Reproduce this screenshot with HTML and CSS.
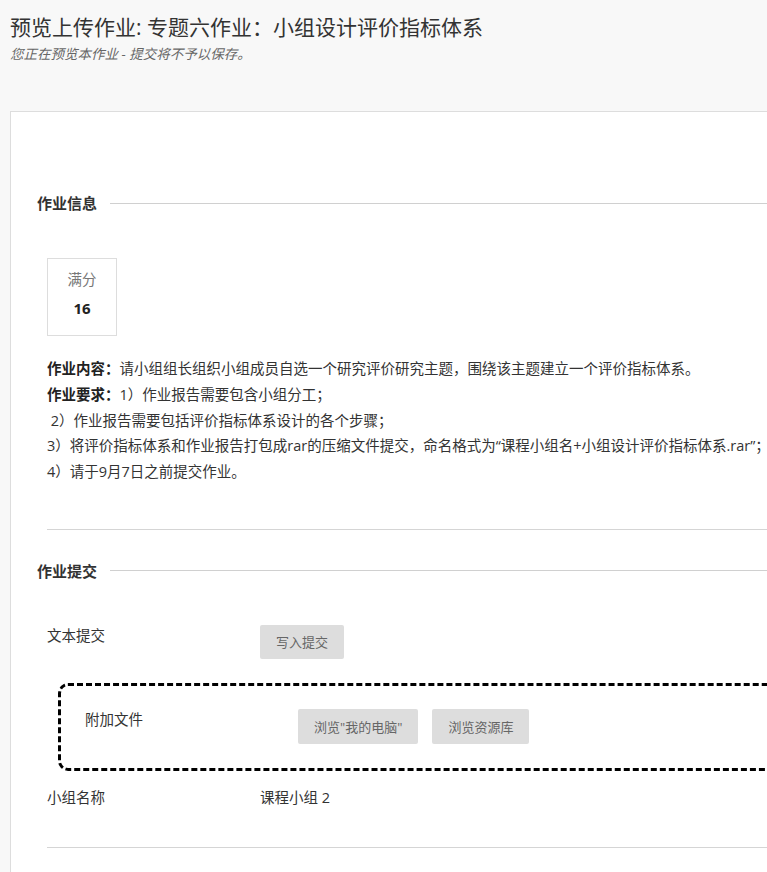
FILE: index.html
```html
<!DOCTYPE html>
<html lang="zh-CN">
<head>
  <meta charset="UTF-8">
  <meta name="viewport" content="width=device-width, initial-scale=1.0">
  <title>预览上传作业</title>
  <link rel="stylesheet" href="styles.css">
</head>
<body>
  <div class="page-head">
    <h1>预览上传作业: 专题六作业：小组设计评价指标体系</h1>
    <p class="hint">您正在预览本作业 - 提交将不予以保存。</p>
  </div>

  <div class="panel">
    <div class="section">
      <h2 class="sec-title"><span>作业信息</span></h2>
      <div class="sec-body">
        <div class="score-box">
          <div class="score-label">满分</div>
          <div class="score-num">16</div>
        </div>
        <div class="desc">
          <p><b>作业内容：</b>请小组组长组织小组成员自选一个研究评价研究主题，围绕该主题建立一个评价指标体系。</p>
          <p><b>作业要求：</b>1）作业报告需要包含小组分工；</p>
          <p>&nbsp;2）作业报告需要包括评价指标体系设计的各个步骤；</p>
          <p>3）将评价指标体系和作业报告打包成rar的压缩文件提交，命名格式为“课程小组名+小组设计评价指标体系.rar”；</p>
          <p>4）请于9月7日之前提交作业。</p>
        </div>
      </div>
    </div>

    <div class="section">
      <h2 class="sec-title"><span>作业提交</span></h2>
      <div class="sec-body">
        <div class="field">
          <div class="field-label">文本提交</div>
          <div class="field-value"><button class="btn">写入提交</button></div>
        </div>
        <div class="drop-zone">
          <div class="field">
            <div class="field-label">附加文件</div>
            <div class="field-value">
              <button class="btn">浏览"我的电脑"</button>
              <button class="btn">浏览资源库</button>
            </div>
          </div>
        </div>
        <div class="field group-row">
          <div class="field-label">小组名称</div>
          <div class="field-value text">课程小组 2</div>
        </div>
      </div>
    </div>
  </div>
</body>
</html>
```

FILE: styles.css
```css
html, body{
  overflow: hidden;
}
body{
  margin: 0;
  background: #f8f8f8;
  color: #333;
  font-family: "Open Sans", "Noto Sans CJK SC", sans-serif;
}
.page-head{
  padding: 13px 10px 0;
}
.page-head h1{
  margin: 0;
  font-size: 21px;
  line-height: 28px;
  font-weight: 400;
  color: #333;
}
.page-head .hint{
  margin: 4px 0 0;
  font-size: 13.5px;
  line-height: 18px;
  font-style: italic;
  color: #666;
}

.panel{
  width: 900px;
  margin: 48px 0 0 10px;
  padding: 81px 0 80px 26px;
  background: #fff;
  border: 1px solid #ddd;
  border-right: none;
}

.sec-title{
  display: flex;
  align-items: center;
  margin: 0;
  font-size: 15px;
  line-height: 20px;
  font-weight: 700;
  color: #333;
}
.sec-title::after{
  content: "";
  flex: 1;
  height: 1px;
  margin-left: 13px;
  background: #d0d0d0;
}
.section + .section .sec-title{
  margin-top: 31px;
}

.sec-body{
  margin-left: 10px;
  padding-bottom: 44px;
  border-bottom: 1px solid #d5d5d5;
  font-size: 14.5px;
}
.section:first-child .sec-body{
  padding-top: 45px;
}
.section + .section .sec-body{
  padding-top: 44px;
  padding-bottom: 39px;
}

.score-box{
  width: 68px;
  padding: 11px 0 17px;
  border: 1px solid #ddd;
  text-align: center;
}
.score-label{
  line-height: 20px;
  color: #777;
}
.score-num{
  margin-top: 8px;
  line-height: 20px;
  font-size: 15px;
  font-weight: 700;
  color: #222;
}

.desc{
  margin-top: 20px;
}
.desc p{
  margin: 0;
  line-height: 25.75px;
  white-space: nowrap;
}
.desc b{
  color: #222;
}

.field{
  display: flex;
  align-items: flex-start;
}
.field-label{
  width: 213px;
  flex-shrink: 0;
  padding-top: 1px;
  line-height: 20px;
}
.field-value{
  display: flex;
  gap: 14px;
}
.field-value.text{
  line-height: 20px;
}
.btn{
  height: 34px;
  padding: 0 16px;
  border: none;
  border-radius: 2px;
  background: #ddd;
  color: #666;
  font-family: inherit;
  font-size: 13px;
}

.drop-zone{
  margin: 24px 0 0 11px;
  padding: 23px 0 24px 24px;
  border: 3px dashed #000;
  border-radius: 10px;
}
.drop-zone .btn{
  height: 35px;
}
.group-row{
  margin-top: 17px;
}
.group-row .field-label{
  padding-top: 0;
}
```
